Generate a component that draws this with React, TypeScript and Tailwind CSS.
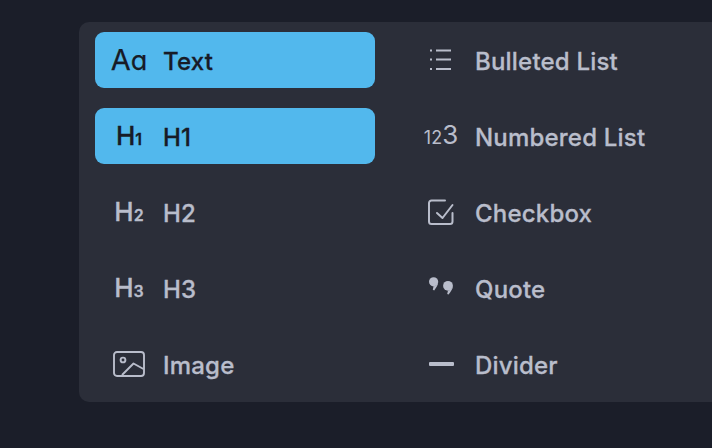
import type { ReactNode } from "react";

function ImageIcon() {
  return (
    <svg width="32" height="26" viewBox="0 0 32 26" fill="none" stroke="currentColor" strokeWidth="1.9">
      <rect x="1" y="1" width="30" height="24" rx="3" />
      <circle cx="10" cy="9" r="2.4" />
      <path d="M9 24 L20.5 12.5 L30.5 18" strokeLinejoin="round" />
    </svg>
  );
}

function ListIcon() {
  return (
    <svg width="22" height="22" viewBox="0 0 22 22" fill="none" stroke="currentColor" strokeWidth="1.8">
      <path d="M6 1.5H21M6 10.5H21M6 20H21" />
      <path d="M0 1.5H2M0 10.5H2M0 20H2" />
    </svg>
  );
}

function CheckIcon() {
  return (
    <svg width="26" height="26" viewBox="0 0 26 26" fill="none" stroke="currentColor" strokeWidth="2" strokeLinecap="round" strokeLinejoin="round">
      <path d="M24.5 14V22.5a2.5 2.5 0 0 1-2.5 2.5H3.5A2.5 2.5 0 0 1 1 22.5V4a2.5 2.5 0 0 1 2.5-2.5H17" />
      <path d="M9 14L14.5 19L24.5 6" />
    </svg>
  );
}

function QuoteIcon() {
  return (
    <svg className="-translate-y-[2px]" width="24" height="18" viewBox="0 0 24 18" fill="currentColor">
      <circle cx="4.6" cy="4.8" r="4.6" />
      <path d="M5 9.2C7 9 9 7 9.2 5 9.2 8 7.2 10.5 5.2 13.4L3.8 12.8 4.6 9Z" />
      <circle cx="19" cy="8.8" r="4.9" />
      <path d="M19.5 13.6C21.5 13.4 23.7 11 23.9 9 23.9 12 21.6 14.6 19.6 17.6L18.2 17 19 13.5Z" />
    </svg>
  );
}

function DividerIcon() {
  return <div className="h-[4px] w-[25px] rounded-[1px] bg-current" />;
}

function Heading({ n }: { n: string }) {
  return (
    <span className="flex items-baseline text-[26px] font-medium leading-none [-webkit-text-stroke:0.3px]">
      H<span className="text-[16px] font-semibold">{n}</span>
    </span>
  );
}

const LEFT: { label: string; icon: ReactNode; active?: boolean }[] = [
  {
    label: "Text",
    active: true,
    icon: (
      <span className="flex -translate-y-[1px] items-baseline text-[29px] leading-none [-webkit-text-stroke:0.25px]">
        A<span className="text-[27px]">ɑ</span>
      </span>
    ),
  },
  { label: "H1", active: true, icon: <Heading n="1" /> },
  { label: "H2", icon: <Heading n="2" /> },
  { label: "H3", icon: <Heading n="3" /> },
  { label: "Image", icon: <ImageIcon /> },
];

const RIGHT: { label: string; icon: ReactNode; active?: boolean }[] = [
  { label: "Bulleted List", icon: <ListIcon /> },
  {
    label: "Numbered List",
    icon: (
      <span className="flex -translate-y-[1px] items-baseline leading-none">
        <span className="text-[18px]">12</span>
        <span className="text-[26px]">3</span>
      </span>
    ),
  },
  { label: "Checkbox", icon: <CheckIcon /> },
  { label: "Quote", icon: <QuoteIcon /> },
  { label: "Divider", icon: <DividerIcon /> },
];

function Row({ label, icon, active }: { label: string; icon: ReactNode; active?: boolean }) {
  return (
    <div
      className={
        active
          ? "flex h-[56px] w-[280px] items-center rounded-[9px] bg-[#52b8ed] text-[#171b27]"
          : "flex h-[56px] w-[280px] items-center rounded-[9px] text-[#b9bdcb]"
      }
    >
      <div className="flex w-[68px] shrink-0 items-center justify-center">{icon}</div>
      <span className="pt-[4px] text-[24px] font-medium leading-none tracking-[0.2px] [-webkit-text-stroke:0.3px]">
        {label}
      </span>
    </div>
  );
}

export default function App() {
  return (
    <div
      className="h-[448px] w-[712px] overflow-hidden bg-[#1b1e29] pt-[22px] pl-[79px]"
      style={{ fontFamily: "Inter, sans-serif" }}
    >
      <div className="flex h-[380px] w-[700px] gap-[32px] rounded-[10px] bg-[#2b2e39] px-[16px] py-[10px]">
        <div className="flex flex-col gap-[20px]">
          {LEFT.map((r) => (
            <Row key={r.label} {...r} />
          ))}
        </div>
        <div className="flex flex-col gap-[20px]">
          {RIGHT.map((r) => (
            <Row key={r.label} {...r} />
          ))}
        </div>
      </div>
    </div>
  );
}
